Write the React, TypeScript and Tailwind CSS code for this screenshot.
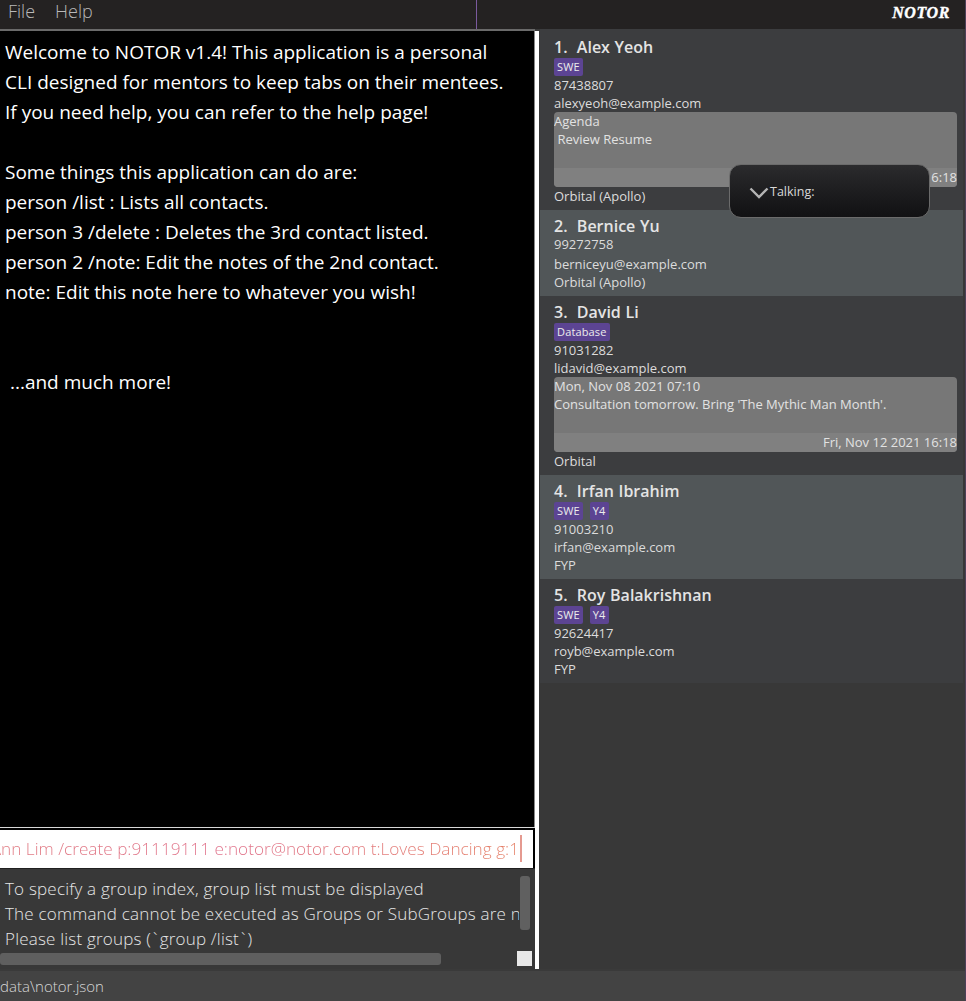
const sans = "font-['Open_Sans',sans-serif]";

function Tag({ label }: { label: string }) {
  return (
    <span className="h-[18px] px-[3px] rounded-[2px] bg-[#5c4493] text-[#ececec] text-[11px] leading-[18px] font-medium tracking-[0.15px]">
      {label}
    </span>
  );
}

function Note({ top, body, date }: { top: string; body: string; date: string }) {
  return (
    <div className="h-[75px] mr-[6px] rounded-[4px] bg-[#777777] overflow-hidden flex flex-col text-[13px] leading-[18px] text-[#e2e2e2]">
      <div className="h-[56px]">
        <div>{top}</div>
        <div>{body}</div>
      </div>
      <div className="h-[19px] leading-[19px] bg-[#808080] text-right">{date}</div>
    </div>
  );
}

type Person = {
  name: string;
  tags?: string[];
  phone: string;
  email: string;
  note?: { top: string; body: string; date: string };
  group: string;
  alt?: boolean;
};

const people: Person[] = [
  {
    name: "1.  Alex Yeoh",
    tags: ["SWE"],
    phone: "87438807",
    email: "alexyeoh@example.com",
    note: { top: "Agenda", body: "\u00a0Review Resume", date: "Fri, Nov 12 2021 16:18" },
    group: "Orbital (Apollo)",
  },
  { name: "2.  Bernice Yu", phone: "99272758", email: "berniceyu@example.com", group: "Orbital (Apollo)", alt: true },
  {
    name: "3.  David Li",
    tags: ["Database"],
    phone: "91031282",
    email: "lidavid@example.com",
    note: {
      top: "Mon, Nov 08 2021 07:10",
      body: "Consultation tomorrow. Bring 'The Mythic Man Month'.",
      date: "Fri, Nov 12 2021 16:18",
    },
    group: "Orbital",
  },
  { name: "4.  Irfan Ibrahim", tags: ["SWE", "Y4"], phone: "91003210", email: "irfan@example.com", group: "FYP", alt: true },
  { name: "5.  Roy Balakrishnan", tags: ["SWE", "Y4"], phone: "92624417", email: "royb@example.com", group: "FYP" },
];

function PersonCard({ person }: { person: Person }) {
  return (
    <div className={`pl-[14px] pt-[5px] pb-[5px] ${person.alt ? "bg-[#515658]" : "bg-[#3c3d3f]"}`}>
      <div className="h-[20px] text-[16px] leading-[22px] font-semibold text-[#e4e4e4] whitespace-pre [word-spacing:0.5px]">
        {person.name}
      </div>
      {person.tags && (
        <div className="flex gap-[7px] h-[18px] mt-[2px]">
          {person.tags.map((t) => (
            <Tag key={t} label={t} />
          ))}
        </div>
      )}
      <div className={`text-[13px] leading-[18px] text-[#dcdcdc] ${person.tags ? "" : "mb-[2px]"}`}>{person.phone}</div>
      <div className="text-[13px] leading-[18px] text-[#dcdcdc]">{person.email}</div>
      {person.note && <Note {...person.note} />}
      <div className="text-[13px] leading-[18px] text-[#dcdcdc]">{person.group}</div>
    </div>
  );
}

const welcome = [
  "Welcome to NOTOR v1.4! This application is a personal",
  "CLI designed for mentors to keep tabs on their mentees.",
  "If you need help, you can refer to the help page!",
  "",
  "Some things this application can do are:",
  "person /list : Lists all contacts.",
  "person 3 /delete : Deletes the 3rd contact listed.",
  "person 2 /note: Edit the notes of the 2nd contact.",
  "note: Edit this note here to whatever you wish!",
  "",
  "",
  " ...and much more!",
];

export default function App() {
  return (
    <div className={`${sans} relative w-[966px] h-[1001px] overflow-hidden flex flex-col bg-[#383838]`}>
      {/* Menu bar */}
      <div className="h-[29px] shrink-0 bg-[#242222] flex items-center">
        <div className="w-[476px] flex gap-5 pl-2 -mt-[6px] text-[18px] leading-[25px] text-[#b9b9b9] font-light">
          <span>File</span>
          <span>Help</span>
        </div>
        <div className="w-px h-full bg-[#7a5a9e]" />
        <div className="flex-1 flex justify-end pr-[16px] -mt-[4px]">
          <span className="font-['Liberation_Serif',serif] italic font-bold text-[16px] leading-[20px] tracking-[0.6px] text-white [-webkit-text-stroke:0.4px_white]">
            NOTOR
          </span>
        </div>
      </div>

      <div className="flex-1 flex min-h-0">
        {/* Left column */}
        <div className="w-[535px] shrink-0 flex flex-col">
          <div className="h-[2px] bg-[#6a6a6a]" />
          <div className="h-[796px] bg-black border-r border-[#888888] pl-[5px] pt-[6px] text-[19px] leading-[30px] text-white">
            {welcome.map((line, i) => (
              <div key={i} className="h-[30px] whitespace-pre">
                {line}
              </div>
            ))}
          </div>
          <div className="h-px bg-[#d8d8d8]" />
          <div className="h-[2px] bg-black" />
          <div className="relative h-[38px] bg-white flex justify-end items-center overflow-hidden pr-[14px] border-r-2 border-black">
            <span className="whitespace-nowrap text-[17.2px] leading-[24px] font-light bg-gradient-to-r from-[#e0787a] via-[#e0708a] to-[#e58066] bg-clip-text text-transparent">
              person Ann Lim /create p:91119111 e:notor@notor.com t:Loves Dancing g:1
            </span>
            <div className="absolute left-[520px] top-[5px] w-[2px] h-[27px] bg-[#e59a90]" />
          </div>
          <div className="relative flex-1 bg-[#383838] border-t border-[#202020] overflow-hidden">
            <div className="pl-[5px] pt-[7px] w-[519px] overflow-hidden text-[17px] leading-[25px] font-light tracking-[0.2px] text-[#e6e6e6] whitespace-nowrap">
              <div>To specify a group index, group list must be displayed</div>
              <div>The command cannot be executed as Groups or SubGroups are not listed</div>
              <div>
                Please list groups (<span className="mx-[2px]">`</span>group /list<span className="mx-[2px]">`</span>)
              </div>
            </div>
            <div className="absolute left-[520px] top-[7px] w-[10px] h-[54px] rounded-[3px] bg-[#606060]" />
            <div className="absolute left-0 top-[84px] w-[441px] h-[12px] rounded-[3px] bg-[#5f5f5f]" />
            <div className="absolute left-[517px] top-[82px] w-[15px] h-[15px] bg-[#e8e8e8]" />
          </div>
        </div>

        <div className="w-[4px] mt-[2px] shrink-0 bg-white" />

        {/* Person list */}
        <div className="flex-1 flex flex-col bg-[#383838] pl-px pr-[3px]">
          <div className="h-[2px] shrink-0 bg-[#3c3d3f]" />
          {people.map((p) => (
            <PersonCard key={p.name} person={p} />
          ))}
        </div>
      </div>

      {/* Status bar */}
      <div className="h-[32px] shrink-0 bg-[#434343] border-t-2 border-[#3a3a3a] flex items-center text-[15px] font-light text-[#d8d8d8]">
        <span className="-ml-[5px]">\data\notor.json</span>
      </div>

      <div className="absolute right-0 top-0 bottom-0 w-px bg-[#4d4058]" />

      {/* Talking popup */}
      <div className="absolute left-[729px] top-[164px] w-[201px] h-[54px] rounded-[12px] border border-[#6b6b6b] bg-gradient-to-b from-[#2b2b2d] to-[#111113] flex items-center pl-[19px] pt-px">
        <svg width="20" height="12" viewBox="0 0 20 12" fill="none" className="mt-[2px]">
          <path d="M1.5 1.5 L10 10 L18.5 1.5" stroke="#b4b4b4" strokeWidth="2.4" />
        </svg>
        <span className="ml-px text-[12.5px] leading-[18px] text-[#d8d8d8]">Talking:</span>
      </div>
    </div>
  );
}
